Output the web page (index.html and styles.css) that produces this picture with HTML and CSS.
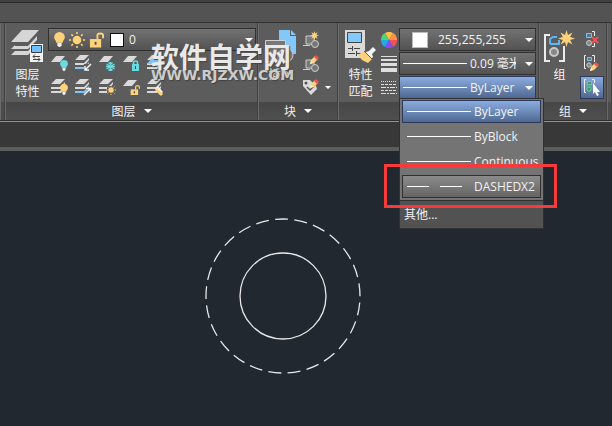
FILE: index.html
```html
<!DOCTYPE html>
<html lang="zh-CN">
<head>
  <meta charset="UTF-8">
  <title>图层特性</title>
  <link rel="stylesheet" href="styles.css">
</head>
<body>
  <svg class="sprite" aria-hidden="true">
    <symbol id="sheet" viewBox="0 0 18 18"><path fill="#dadada" d="M5 1h9L9 7H0z"/></symbol>
    <symbol id="stack" viewBox="0 0 18 18">
      <path fill="#dadada" d="M5 0h9l-5 5H0zM0 8h9l5-5v2l-4 5H0zM0 12h9l5-5v2l-4 5H0z"/>
    </symbol>
    <symbol id="stack-blue" viewBox="0 0 18 18">
      <path fill="#dadada" d="M5 0h9l-5 5H0zM0 8h9l5-5v2l-4 5H0z"/>
      <path fill="#7cc4fa" d="M0 12h9l5-5v2l-4 5H0z"/>
    </symbol>
    <symbol id="bulb" viewBox="0 0 10 14">
      <path fill="currentColor" d="M5 0a5 5 0 0 1 5 5c0 2-2 3-2 5H2C2 8 0 7 0 5a5 5 0 0 1 5-5z"/>
      <path fill="#f2f2f2" d="M3 10h4v3H6v1H4v-1H3z"/>
    </symbol>
    <symbol id="sun" viewBox="0 0 16 16">
      <circle cx="8" cy="8" r="4.3" fill="#ffd27a"/>
      <path stroke="#ffd27a" stroke-width="1.5" d="M8 0v2M8 14v2M0 8h2M14 8h2M2.4 2.4l1.5 1.5M12.1 12.1l1.5 1.5M2.4 13.6l1.5-1.5M12.1 3.9l1.5-1.5"/>
    </symbol>
    <symbol id="unlock" viewBox="0 0 16 16">
      <path fill="#ffd27a" d="M1 7h12v9H1z"/>
      <path fill="none" stroke="#ffd27a" stroke-width="2" d="M9 7V3q0-2 3-2t3 2v3"/>
      <path fill="#4a4a4a" d="M6 10h2v3H6z"/>
    </symbol>
    <symbol id="pencil" viewBox="0 0 9 9">
      <path fill="#ffd27a" d="M0 9l1-4 4-4 3 3-4 4z"/>
      <path fill="#f25252" d="M4 2l2-2 3 3-2 2z"/>
      <path fill="#efefef" d="M0 9l1-3 2 2z"/>
    </symbol>
    <symbol id="brush" viewBox="0 0 18 16">
      <path fill="#f5f5f5" d="M8 5l3-1 4-4 3 3-4 4 1 3-2 2-7-6z"/>
      <path fill="#ffd27a" d="M6 4l8 8-4 4-6-3-4-5z"/>
      <path stroke="#6b5b3d" d="M6 4l8 8"/>
    </symbol>
    <symbol id="brush-small" viewBox="0 0 10 10">
      <path fill="#f5f5f5" d="M1 3l3-3 5 6-3 3z"/>
      <path fill="#ffd27a" d="M1 4l2-2 6 6-2 2z"/>
    </symbol>
    <symbol id="star" viewBox="0 0 16 16">
      <path fill="#ffd27a" d="M8 0l1.400 4.600 4.200-2.200-2.200 4.200L16 8l-4.600 1.400 2.200 4.200-4.200-2.200L8 16l-1.400-4.600-4.200 2.200 2.200-4.200L0 8l4.600-1.400-2.200-4.200 4.200 2.200z"/>
    </symbol>
    <symbol id="block" viewBox="0 0 18 18">
      <path fill="#777" stroke="#cfcfcf" d="M3 5h8v8H3z"/>
      <path stroke="#cfcfcf" d="M0 14.5h7"/>
      <circle cx="12" cy="13" r="3.5" fill="#777" stroke="#cfcfcf"/>
    </symbol>
  </svg>

  <header class="app">
    <div class="tabs"></div>

    <div class="ribbon">
      <div class="panel panel-edge"></div>

      <section class="panel panel-layers">
        <div class="panel-body">
          <button class="big">
            <svg width="33" height="33" viewBox="0 0 33 33">
              <path fill="#d6d6d6" d="M11 0h17L17 12H0zM4 15l-4 4h17l9-9v-4l-9 10H4zM4 21l-4 4h17l4-4v-4l-4 4z"/>
              <path fill="#f2f2f2" d="M19 14h13v18H19z"/>
              <path fill="#71c1ff" stroke="#3d3d3d" d="M20.500 15.500h10v7h-10z"/>
              <path fill="none" stroke="#444" d="M22 26.500h7M24 24.500l-2 2 2 2M22 29.500h7M27 27.500l2 2-2 2"/>
            </svg>
            <span>图层</span><span>特性</span>
          </button>
          <div class="layer-tools">
            <div class="combo">
              <svg class="yellow" width="11" height="15"><use href="#bulb"/></svg>
              <svg width="16" height="16"><use href="#sun"/></svg>
              <svg width="15" height="16"><use href="#unlock"/></svg>
              <span class="swatch swatch-small"></span>
              <select aria-label="图层"><option>0</option></select>
            </div>
            <div class="tool-grid">
              <button aria-label="关闭图层"><svg width="18" height="18"><use href="#sheet" width="18" height="18"/><use class="cyan" href="#bulb" x="9" y="5" width="8" height="11"/></svg></button>
              <button aria-label="隔离"><svg width="18" height="18"><use href="#stack-blue" width="18" height="18"/><path fill="#5c5c5c" d="M9 9h9v9H9z"/><path fill="none" stroke="#f5f5f5" stroke-width="1.500" d="M16 9l-6 6M10 11v4h4"/></svg></button>
              <button aria-label="冻结"><svg width="18" height="18"><use href="#sheet" width="18" height="18"/><path fill="none" stroke="#69dbe0" stroke-width="1.300" d="M11.500 7v9M7.500 9l8 5M7.500 14l8-5M9.500 7.500l2 2 2-2M9.500 15.500l2-2 2 2M7 11.500h9"/></svg></button>
              <button aria-label="锁定"><svg width="18" height="18"><use href="#sheet" width="18" height="18"/><path fill="#69dbe0" d="M9 9h7v7H9z"/><path fill="none" stroke="#69dbe0" stroke-width="1.500" d="M10.500 9V7.500q0-1.500 2-1.500t2 1.500V9"/><path fill="#444" d="M12 11h1v3h-1z"/></svg></button>
              <button aria-label="置为当前"><svg width="18" height="18"><use href="#stack" width="18" height="18"/><path fill="#7cc4fa" d="M4 4h12l-5 5H0z"/></svg></button>
              <button aria-label="打开所有图层"><svg width="18" height="18"><use href="#stack" width="18" height="18"/><use class="yellow" href="#bulb" x="9" y="5" width="8" height="11"/></svg></button>
              <button aria-label="取消隔离"><svg width="18" height="18"><use href="#stack-blue" width="18" height="18"/><path fill="none" stroke="#f5f5f5" stroke-width="1.500" d="M9 16l6-6M11 9.500h4.500V14"/></svg></button>
              <button aria-label="解冻"><svg width="18" height="18"><use href="#stack" width="18" height="18"/><path fill="#5c5c5c" d="M8 7h9v9H8z"/><use href="#sun" x="7" y="6" width="10" height="10"/></svg></button>
              <button aria-label="解锁"><svg width="18" height="18"><use href="#sheet" width="18" height="18"/><use href="#unlock" x="7" y="6" width="10" height="10"/></svg></button>
              <button aria-label="匹配图层"><svg width="18" height="18"><use href="#stack" width="18" height="18"/><use href="#brush-small" x="7" y="7" width="10" height="10"/></svg></button>
            </div>
          </div>
        </div>
        <button class="panel-title">图层<i class="arrow"></i></button>
      </section>

      <section class="panel panel-block">
        <div class="panel-body">
          <button class="big">
            <svg width="33" height="33" viewBox="0 0 33 33">
              <path fill="#82c8fb" d="M15 0h11v6h6v18H15z"/>
              <path fill="#82c8fb" d="M27 0l5 5h-5z"/>
              <path fill="#777" stroke="#cfcfcf" d="M1.500 10.500h20v21h-20z"/>
              <circle cx="22" cy="25" r="7" fill="#777" stroke="#cfcfcf"/>
            </svg>
            <span>插入</span>
          </button>
          <div class="tool-col">
            <button aria-label="创建块"><svg width="18" height="18"><use href="#block" width="18" height="18"/><use href="#star" x="7" y="0" width="9" height="9"/></svg></button>
            <button aria-label="编辑块"><svg width="18" height="18"><use href="#block" width="18" height="18"/><use href="#pencil" x="7" y="0" width="9" height="9"/></svg></button>
            <button class="with-arrow" aria-label="编辑属性"><svg width="18" height="18"><path fill="#dadada" d="M0 1h7l6 6 1 3-6 6-8-9z"/><circle cx="3" cy="4" r="1.500" fill="#555"/><path fill="none" stroke="#555" stroke-width="1.500" d="M4 8l3 3 4-4"/><use href="#pencil" x="7" y="0" width="9" height="9"/></svg><i class="arrow arrow-small"></i></button>
          </div>
        </div>
        <button class="panel-title">块<i class="arrow"></i></button>
      </section>

      <section class="panel panel-props">
        <div class="panel-body">
          <button class="big">
            <svg width="33" height="33" viewBox="0 0 33 33">
              <path fill="#dadada" d="M1 0h20v28H1z"/>
              <path fill="#82c8fb" stroke="#444" d="M3.500 2.500h14v10h-14z"/>
              <path stroke="#444" d="M4 18.500h4M10 18.500h6M8.500 16v5M4 23.500h7M13 23.500h5M12.500 21v5"/>
              <use href="#brush" x="14" y="17" width="18" height="16"/>
            </svg>
            <span>特性</span><span>匹配</span>
          </button>
          <div class="props">
            <div class="prop">
              <svg width="16" height="16" viewBox="-8 -8 16 16">
                <path fill="#ffc043" d="M0 0L-4-7A8 8 0 0 1 4-7z"/>
                <path fill="#ff9448" d="M0 0L4-7A8 8 0 0 1 8 0z"/>
                <path fill="#f0525a" d="M0 0H8A8 8 0 0 1 4 7z"/>
                <path fill="#8a4bf5" d="M0 0L4 7A8 8 0 0 1-4 7z"/>
                <path fill="#21aaea" d="M0 0L-4 7A8 8 0 0 1-8 0z"/>
                <path fill="#55cf78" d="M0 0H-8A8 8 0 0 1-4-7z"/>
              </svg>
              <div class="combo">
                <span class="swatch"></span>
                <select aria-label="对象颜色"><option>255,255,255</option></select>
              </div>
            </div>
            <div class="prop">
              <svg width="16" height="16"><path fill="#dedede" d="M0 0h16v1H0zM0 3h16v2H0zM0 7h16v3H0zM0 12h16v4H0z"/></svg>
              <div class="combo">
                <span class="line"></span>
                <select class="cut" aria-label="线宽"><option>0.09 毫米</option></select>
              </div>
            </div>
            <div class="prop">
              <svg width="16" height="16"><path stroke="#dedede" stroke-dasharray="1 1" d="M0 1.500h16"/><path stroke="#dedede" stroke-dasharray="3 1" d="M0 4.500h16"/><path stroke="#dedede" stroke-dasharray="5 1 2 1" d="M0 7.500h16M0 13.500h16"/><path stroke="#dedede" stroke-dasharray="3 1" d="M0 10.500h16"/></svg>
              <div class="combo combo-open">
                <span class="line"></span>
                <select aria-label="线型"><option>ByLayer</option></select>
                <div class="menu">
                  <div class="menu-list">
                    <button class="option selected"><span class="line"></span>ByLayer</button>
                    <button class="option"><span class="line"></span>ByBlock</button>
                    <button class="option"><span class="line"></span>Continuous</button>
                    <button class="option hovered"><span class="line dashed"></span>DASHEDX2</button>
                  </div>
                  <button class="other">其他...</button>
                  <div class="mark"></div>
                </div>
              </div>
            </div>
          </div>
        </div>
        <button class="panel-title" aria-label="特性"></button>
      </section>

      <section class="panel panel-group">
        <div class="panel-body">
          <button class="big">
            <svg width="33" height="33" viewBox="0 0 33 33">
              <path fill="none" stroke="#ececec" stroke-width="2" d="M7 5H2v26h5M16 31h5V16"/>
              <path fill="none" stroke="#5eb5f5" stroke-width="2" d="M7 14V9l3-2h4M7 14h9v-4"/>
              <circle cx="11" cy="22" r="4" fill="#888" stroke="#c8c8c8" stroke-width="2"/>
              <use href="#star" x="15" y="0" width="17" height="17"/>
            </svg>
            <span>组</span>
          </button>
          <div class="tool-col">
            <button aria-label="解除编组"><svg width="18" height="18"><path fill="#58748a" stroke="#79c5fa" d="M3.500 2.500h5v4h-5z"/><circle cx="6" cy="12" r="2.500" fill="#888" stroke="#c8c8c8"/><path fill="none" stroke="#eee" d="M9 .500h2.500V5M9 15.500h2.500V12"/><path stroke="#f25252" stroke-width="2" d="M9 6l6 6M15 6l-6 6"/></svg></button>
            <button aria-label="组编辑"><svg width="18" height="18"><path fill="none" stroke="#eee" d="M3 .500H1.500v13H3M9 .500h2.500V7"/><path fill="#58748a" stroke="#79c5fa" d="M4.500 2.500h4v3h-4z"/><circle cx="6" cy="10" r="2.200" fill="#888" stroke="#c8c8c8"/><use href="#pencil" x="7" y="7" width="9" height="9"/></svg></button>
            <button class="pressed" aria-label="启用组选择"><svg width="18" height="18"><path fill="none" stroke="#eee" d="M3 .500H1.500v13H3M9 .500h2.500V4"/><path fill="#49917c" stroke="#5ad88b" d="M4.500 2.500h4v3h-4z"/><circle cx="6" cy="10" r="2.200" fill="#49917c" stroke="#5ad88b"/><path fill="#fff" d="M10 4v11l2-2 2 4 2-1-2-3h3z"/></svg></button>
          </div>
        </div>
        <button class="panel-title">组<i class="arrow"></i></button>
      </section>

      <div class="panel panel-edge"></div>
    </div>

    <div class="strip"></div>
    <div class="watermark">
      <div class="watermark-name">软件自学网</div>
      <div class="watermark-url">WWW.RJZXW.COM</div>
    </div>
  </header>

  <main class="canvas">
    <svg class="drawing" width="156" height="156" viewBox="-78 -78 156 156" fill="none" stroke="#e8e8e8" stroke-width="1.300">
      <circle r="43"/>
      <circle r="77" pathLength="250" stroke-dasharray="6.700 3.300" stroke-dashoffset="-3.400"/>
    </svg>
  </main>
</body>
</html>
```

FILE: styles.css
```css
* {
  box-sizing: border-box;
}
body {
  margin: 0;
  min-height: 100vh;
  display: flex;
  flex-direction: column;
  background: #212830;
  color: #f2f2f2;
  font: 12px/17px "Open Sans", "Noto Sans CJK SC", sans-serif;
}
button,
select {
  margin: 0;
  padding: 0;
  border: 0;
  background: none;
  color: inherit;
  font: inherit;
}
svg {
  display: block;
  flex: none;
}
.sprite {
  position: absolute;
  width: 0;
  height: 0;
}
.yellow {
  color: #ffd27a;
}
.cyan {
  color: #69dbe0;
}

/* ribbon */
.app {
  position: relative;
}
.tabs {
  height: 23px;
  background: #535353;
  border-top: 2px solid #404040;
  border-bottom: 1px solid #303030;
  box-shadow: inset 0 1px #292929;
}
.ribbon {
  display: flex;
  background: #5c5c5c;
  border-bottom: 1px solid #2e2e2e;
}
.panel {
  display: flex;
  flex-direction: column;
  border-right: 1px solid #424242;
  border-left: 1px solid #6a6a6a;
}
.panel-edge {
  width: 5px;
  background: linear-gradient(#5c5c5c 79px, #4c4c4c 79px);
}
.panel-layers {
  flex: 1;
}
.panel-block {
  width: 80px;
}
.panel-props {
  width: 201px;
}
.panel-group {
  width: 68px;
}
.panel-body {
  display: flex;
  gap: 4px;
  min-height: 79px;
  padding: 5px 0 0 5px;
}
.panel-title {
  display: flex;
  align-items: center;
  justify-content: center;
  gap: 8px;
  height: 18px;
  background: linear-gradient(#464646, #4f4f4f);
}
.arrow {
  border: 4px solid transparent;
  border-top-color: #fff;
  border-bottom: 0;
}
.arrow-small {
  border-width: 3px;
  border-bottom: 0;
}
.big {
  display: flex;
  flex-direction: column;
  align-items: center;
  width: 33px;
  padding-top: 2px;
}
.big svg {
  margin-bottom: 3px;
}

/* combo boxes */
.combo {
  position: relative;
  display: flex;
  align-items: center;
  height: 23px;
  padding-right: 2px;
  border: 1px solid #303030;
  background: linear-gradient(#727272, #525252);
}
.combo::after {
  content: "";
  border: 4px solid transparent;
  border-top-color: #fff;
  border-bottom: 0;
}
.combo select {
  flex: 1;
  min-width: 0;
  appearance: none;
}
.combo-open {
  background: linear-gradient(#8bacdf, #4f6892);
  border-color: #2c395a;
}
.swatch {
  width: 16px;
  height: 16px;
  margin: 0 10px 0 12px;
  background: #fff;
  border: 1px solid #bbb;
}
.swatch-small {
  width: 14px;
  height: 14px;
  border-color: #111;
}
.line {
  flex: none;
  width: 64px;
  height: 1px;
  margin: 0 3px;
  background: #fff;
}
.dashed {
  background: linear-gradient(90deg, #fff 22px, transparent 22px 33px, #fff 33px 55px, transparent 55px);
}
.combo .cut {
  flex: none;
  width: 46px;
  margin-right: auto;
  overflow: hidden;
  text-overflow: clip;
}

/* layers */
.layer-tools {
  flex: 1;
  padding-right: 1px;
}
.layer-tools .combo {
  gap: 4px;
  padding-left: 5px;
}
.layer-tools .swatch {
  margin: 0 1px 0 2px;
}
.tool-grid {
  display: grid;
  grid-template: 24px 18px / repeat(5, 24px);
  padding: 4px 0 0 3px;
}
.tool-grid button {
  display: flex;
}

/* block and group */
.tool-col {
  display: flex;
  flex-direction: column;
  gap: 1px;
}
.tool-col button {
  display: flex;
  align-items: center;
  height: 23px;
  padding: 0 3px;
}
.tool-col .with-arrow {
  gap: 4px;
}
.panel-block .panel-body {
  gap: 3px;
}
.panel-group .panel-body {
  padding-left: 3px;
}
.tool-col .pressed {
  border: 1px solid #2c395a;
  padding: 0 2px;
  background: linear-gradient(#8bacdf, #4f6892);
}

/* properties */
.props {
  display: flex;
  flex: 1;
  flex-direction: column;
  gap: 1px;
  padding-right: 2px;
}
.prop {
  display: flex;
  align-items: center;
  gap: 2px;
}
.prop .combo {
  flex: 1;
}
.menu {
  position: absolute;
  z-index: 2;
  top: 21px;
  left: -1px;
  width: 145px;
  border: 1px solid #303030;
  background: #525252;
}
.menu-list {
  display: flex;
  flex-direction: column;
  gap: 2px;
  padding: 1px 2px 2px;
  background: #747474;
  border-bottom: 1px solid #303030;
}
.option {
  display: flex;
  align-items: center;
  height: 23px;
  padding: 0 1px 1px;
  border: 1px solid transparent;
  white-space: nowrap;
}
.selected {
  background: linear-gradient(#8bacdf, #4f6892);
  border-color: #2c395a;
}
.hovered {
  background: linear-gradient(#8b8b8b, #656565);
  border-color: #303030;
}
.other {
  display: block;
  width: 100%;
  height: 27px;
  padding: 0 4px;
  text-align: left;
}
.mark {
  position: absolute;
  top: 65px;
  left: -16px;
  right: -14px;
  height: 44px;
  border: 3px solid #f93a3a;
}

.strip {
  height: 30px;
  background: #383838;
  border-top: 1px solid #929292;
  border-bottom: 4px solid #5c5c5c;
}
.watermark {
  position: absolute;
  top: 42px;
  left: 151px;
  color: #e9e9e9;
  text-shadow: 1px 1px 1px #444;
  white-space: nowrap;
  pointer-events: none;
}
.watermark-name {
  font: bold 28px/28px "Noto Sans CJK SC", sans-serif;
}
.watermark-url {
  color: #ccc;
  font: bold 14px/10px "DejaVu Sans", sans-serif;
}

/* drawing area */
.canvas {
  position: relative;
  flex: 1;
}
.drawing {
  position: absolute;
  top: 67px;
  left: 205px;
}
```
